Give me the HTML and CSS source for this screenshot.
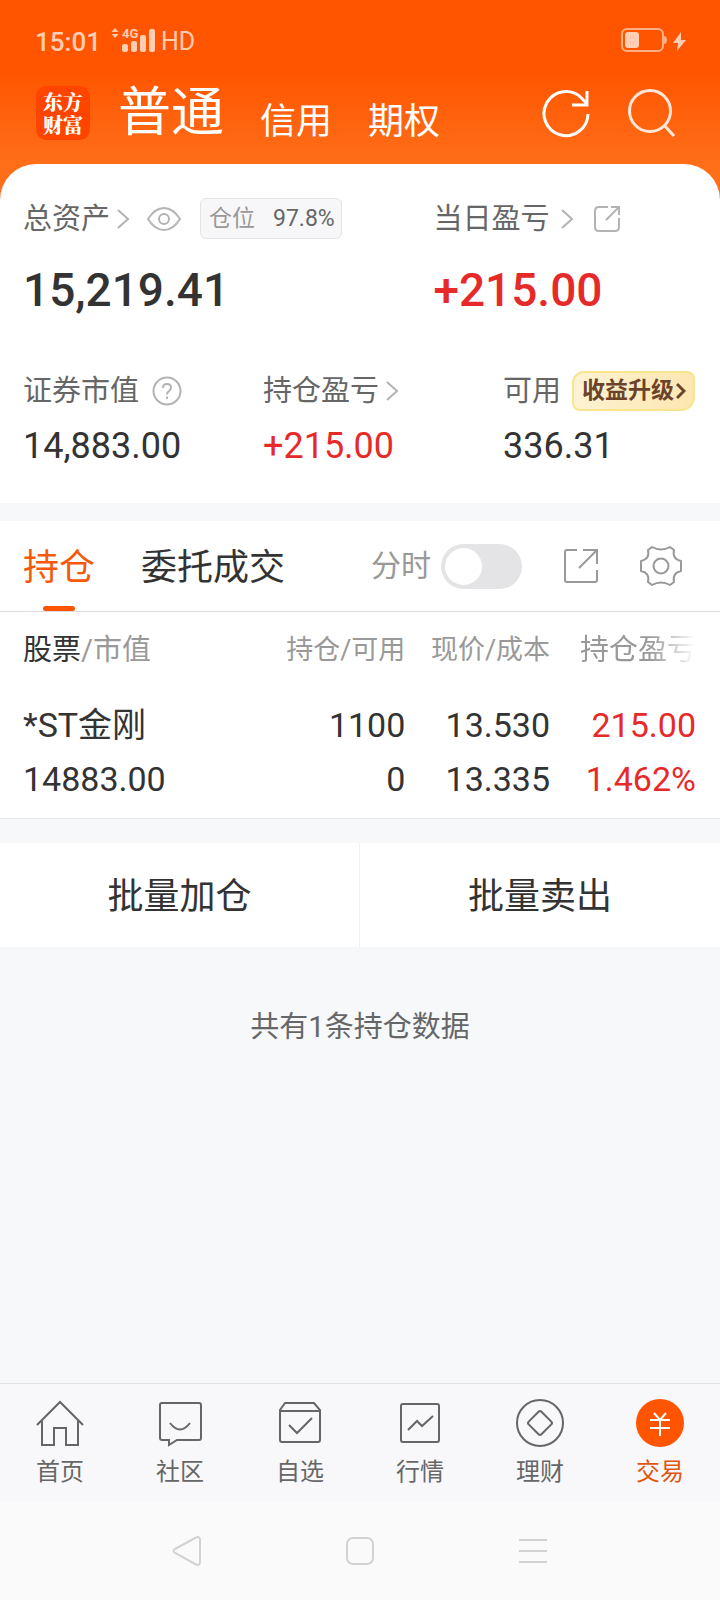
FILE: index.html
```html
<!DOCTYPE html>
<html lang="zh-CN">
<head>
<meta charset="utf-8">
<meta name="viewport" content="width=device-width, initial-scale=1">
<title>交易</title>
<link rel="stylesheet" href="styles.css">
</head>
<body>
<div class="hero">
  <div class="status">
    <span class="clock">15:01</span>
    <svg class="signal" width="46" height="26" viewBox="0 0 46 26" fill="currentColor">
      <path d="M4 1l3.5 4h-7zM4 11L.5 7h7z"/>
      <text x="11" y="11" font-size="13" font-weight="700">4G</text>
      <rect x="11" y="17" width="6" height="8" rx="2"/>
      <rect x="20" y="14" width="6" height="11" rx="2"/>
      <rect x="29" y="8" width="6" height="17" rx="2"/>
      <rect x="38" y="2" width="6" height="23" rx="2"/>
    </svg>
    <span class="hd">HD</span>
    <svg class="battery" width="66" height="26" viewBox="0 0 66 26">
      <rect x="2" y="2" width="41" height="22" rx="5" fill="none" stroke="currentColor" stroke-width="2" opacity=".75"/>
      <rect x="5" y="5" width="14" height="16" rx="3" fill="currentColor"/>
      <path d="M44 9q3 0 3 4t-3 4z" fill="currentColor" opacity=".75"/>
      <path d="M61 5L53 16h5l-1 8 9-11h-5z" fill="currentColor"/>
    </svg>
  </div>
  <header class="topbar">
    <div class="logo">东方<br>财富</div>
    <nav class="modes">
      <a class="mode mode-on" href="#normal">普通</a>
      <a class="mode" href="#credit">信用</a>
      <a class="mode" href="#option">期权</a>
    </nav>
    <div class="actions">
      <button class="icon-btn" aria-label="刷新">
        <svg width="50" height="50" viewBox="0 0 50 50" fill="none" stroke="#fff" stroke-width="3"><path d="M47 26A22 22 0 1 1 40.500 10L46 16M46 3V17H31"/></svg>
      </button>
      <button class="icon-btn" aria-label="搜索">
        <svg width="50" height="50" viewBox="0 0 50 50" fill="none" stroke="#ffe6d8" stroke-width="3"><circle cx="23" cy="23" r="20.500"/><path d="M37 37L47 48"/></svg>
      </button>
    </div>
  </header>

  <main class="account">
    <section class="totals">
      <div class="cell">
        <div class="label-row">
          <span class="label">总资产</span>
          <svg class="arrow" width="12" height="20" viewBox="0 0 12 20"><path d="M1 1l10 9-10 9"/></svg>
          <button class="icon-btn eye" aria-label="隐藏资产">
            <svg width="34" height="24" viewBox="0 0 34 24" fill="none" stroke="#b3b3b3" stroke-width="2"><path d="M1 12Q8 1 17 1t16 11Q26 23 17 23T1 12z"/><circle cx="17" cy="12" r="5"/></svg>
          </button>
          <span class="position"><span class="position-name">仓位</span><span>97.8%</span></span>
        </div>
        <div class="big">15,219.41</div>
      </div>
      <div class="cell">
        <div class="label-row">
          <span class="label">当日盈亏</span>
          <svg class="arrow arrow-far" width="12" height="20" viewBox="0 0 12 20"><path d="M1 1l10 9-10 9"/></svg>
          <button class="icon-btn share-small" aria-label="分享">
            <svg width="28" height="28" viewBox="0 0 28 28" fill="none" stroke="#b3b3b3" stroke-width="2"><path d="M15 2H6Q2 2 2 6v16q0 4 4 4h16q4 0 4-4v-9M13 15L25 3M18 2h8v8"/></svg>
          </button>
        </div>
        <div class="big up">+215.00</div>
      </div>
    </section>
    <section class="details">
      <div class="cell">
        <div class="label-row">
          <span class="label">证券市值</span>
          <button class="icon-btn help" aria-label="说明">
            <svg width="30" height="30" viewBox="0 0 30 30" fill="none" stroke="#b3b3b3" stroke-width="2"><circle cx="15" cy="15" r="13.500"/><path d="M11 12q0-4 4-4t4 3.500q0 2-2 3.500t-2 3.500M15 20.500v2.500"/></svg>
          </button>
        </div>
        <div class="value">14,883.00</div>
      </div>
      <div class="cell">
        <div class="label-row">
          <span class="label">持仓盈亏</span>
          <svg class="arrow" width="12" height="20" viewBox="0 0 12 20"><path d="M1 1l10 9-10 9"/></svg>
        </div>
        <div class="value up">+215.00</div>
      </div>
      <div class="cell">
        <div class="label-row">
          <span class="label">可用</span>
          <button class="upgrade">收益升级<svg width="10" height="18" viewBox="0 0 10 18" fill="none" stroke="currentColor" stroke-width="3"><path d="M1 2l7 7-7 7"/></svg></button>
        </div>
        <div class="value">336.31</div>
      </div>
    </section>
  </main>
</div>

<section class="holdings">
  <div class="tabs">
    <button class="tab tab-on">持仓</button>
    <button class="tab">委托成交</button>
    <label class="minute">分时<input class="switch" type="checkbox" role="switch"></label>
    <button class="icon-btn" aria-label="导出">
      <svg width="36" height="36" viewBox="0 0 36 36" fill="none" stroke="#999" stroke-width="2"><path d="M14 2H4Q2 2 2 4v28q0 2 2 2h28q2 0 2-2V22M16 20L34 2M20 2h14v14"/></svg>
    </button>
    <button class="icon-btn" aria-label="设置">
      <svg width="42" height="42" viewBox="0 0 42 42" fill="none" stroke="#999" stroke-width="2" stroke-linejoin="round"><path d="M12 2Q21 7 30 2L34 5Q32 14 41 16V26Q32 28 34 37L30 40Q21 35 12 40L8 37Q10 28 1 26V16Q10 14 8 5z"/><circle cx="21" cy="21" r="7.500"/></svg>
    </button>
  </div>
  <table class="stocks">
    <colgroup><col class="c-name"><col class="c-qty"><col class="c-price"><col class="c-gain"></colgroup>
    <thead>
      <tr><th class="th-name"><b>股票</b>/市值</th><th>持仓/可用</th><th>现价/成本</th><th class="th-gain"><span class="fade">持仓盈亏</span></th></tr>
    </thead>
    <tbody>
      <tr>
        <td><span>*ST金刚</span><span>14883.00</span></td>
        <td><span>1100</span><span>0</span></td>
        <td><span>13.530</span><span>13.335</span></td>
        <td class="up"><span>215.00</span><span>1.462%</span></td>
      </tr>
    </tbody>
  </table>
</section>

<div class="batch">
  <button class="batch-btn">批量加仓</button>
  <button class="batch-btn">批量卖出</button>
</div>
<p class="count">共有1条持仓数据</p>

<nav class="bottom">
  <a class="item" href="#home">
    <svg width="48" height="48" viewBox="0 0 48 48"><path d="M1 26L24 3l23 23M6 21v25h12V29h12v17h12V21"/></svg>首页</a>
  <a class="item" href="#community">
    <svg width="48" height="48" viewBox="0 0 48 48"><path d="M5 4h38q2 0 2 2v33q0 2-2 2H21l-8 5v-5H6q-2 0-2-2V6q0-2 2-2M14 24q10 13 20 0"/></svg>社区</a>
  <a class="item" href="#watch">
    <svg width="48" height="48" viewBox="0 0 48 48"><path d="M4 11l5-7h29l6 7v30q0 2-2 2H6q-2 0-2-2zM4 12h40M13 26l8 8 15-15"/></svg>自选</a>
  <a class="item" href="#market">
    <svg width="48" height="48" viewBox="0 0 48 48"><rect x="5" y="5" width="38" height="38" rx="2"/><path d="M12 31l9-9 5 5 11-10"/></svg>行情</a>
  <a class="item" href="#wealth">
    <svg width="48" height="48" viewBox="0 0 48 48"><circle cx="24" cy="24" r="23"/><rect x="15" y="15" width="18" height="18" rx="2" transform="rotate(45 24 24)"/></svg>理财</a>
  <a class="item item-on" href="#trade">
    <svg width="48" height="48" viewBox="0 0 48 48"><circle class="disc" cx="24" cy="24" r="24"/><path class="yen" d="M18 14l6 7 6-7M14 21h20M14 29h20M24 21v16"/></svg>交易</a>
</nav>
<div class="system">
  <button class="icon-btn" aria-label="返回"><svg width="30" height="32" viewBox="0 0 30 32"><path d="M3 14L24 2.500Q28 1 28 5v22q0 4-4 2.500L3 18Q0 16 3 14z"/></svg></button>
  <button class="icon-btn" aria-label="主屏幕"><svg width="28" height="28" viewBox="0 0 28 28"><rect x="1" y="1" width="26" height="26" rx="6"/></svg></button>
  <button class="icon-btn" aria-label="最近任务"><svg width="28" height="28" viewBox="0 0 28 28"><path d="M0 3h28M0 14h28M0 25h28"/></svg></button>
</div>
</body>
</html>
```
FILE: styles.css
```css
* { box-sizing: border-box; }
body {
  margin: 0;
  min-height: 100vh;
  display: flex;
  flex-direction: column;
  background: #f6f8fa;
  color: #333;
  font-family: Roboto, "Noto Sans CJK SC", sans-serif;
  font-size: 29px;
}
button {
  padding: 0;
  border: 0;
  background: none;
  color: inherit;
  font: inherit;
}
a { color: inherit; text-decoration: none; }
svg { display: block; flex: none; }
.icon-btn { display: flex; }
.up { color: #e62a2a; }

.hero { background: linear-gradient(#ff5500 70px, #ff6e19 164px); }
.status {
  display: flex;
  align-items: center;
  height: 80px;
  padding: 0 34px 0 35px;
  color: #ffcdb3;
  font-size: 26px;
}
.clock { padding-top: 3px; font-weight: 500; }
.signal { margin: 0 4px 0 10px; }
.hd { padding-top: 2px; font-size: 25px; }
.battery { margin-left: auto; }

.topbar {
  display: flex;
  align-items: center;
  height: 84px;
  padding: 0 43px 18px 36px;
}
.logo {
  width: 54px;
  height: 54px;
  padding-top: 4px;
  border-radius: 10px;
  background: #ff4400;
  color: #fff;
  font-family: "Noto Serif CJK SC", "Noto Sans CJK SC", sans-serif;
  font-size: 20px;
  font-weight: 900;
  line-height: 23px;
  text-align: center;
}
.modes {
  display: flex;
  align-items: flex-end;
  gap: 36px;
  margin-left: 28px;
  color: #fff;
}
.mode { font-size: 36px; line-height: 42px; }
.mode-on { font-size: 53px; line-height: 60px; }
.actions { display: flex; gap: 36px; margin-left: auto; }

.account {
  padding: 34px 0 33px;
  border-radius: 36px 36px 0 0;
  background: #fff;
}
.totals { display: grid; grid-template-columns: 57% 43%; }
.details {
  display: grid;
  grid-template-columns: repeat(3, 1fr);
  margin-top: 50px;
}
.cell { padding-left: 23px; }
.label-row { display: flex; align-items: center; height: 41px; }
.label { color: #666; line-height: 40px; white-space: nowrap; }
.arrow { margin-left: 7px; fill: none; stroke: #b3b3b3; stroke-width: 2; }
.arrow-far { margin-left: 12px; }
.eye { margin-left: 18px; }
.share-small { margin-left: 20px; }
.help { margin-left: 13px; }
.position {
  display: flex;
  align-items: center;
  gap: 18px;
  height: 41px;
  margin-left: 19px;
  padding: 0 6px 0 8px;
  border: 1px solid #e4e4e6;
  border-radius: 6px;
  background: #f7f7fa;
  color: #666;
  font-size: 23px;
  line-height: 40px;
}
.position-name { color: #999; }
.big {
  margin-top: 21px;
  font-size: 46px;
  font-weight: 500;
  line-height: 60px;
}
.value { margin-top: 11px; font-size: 36px; line-height: 48px; }
.upgrade {
  display: flex;
  align-items: center;
  gap: 2px;
  height: 40px;
  margin-left: 11px;
  padding: 0 7px 0 8px;
  border: 2px solid #f8e58c;
  border-radius: 12px 8px 14px 8px;
  background: linear-gradient(100deg, #fdf3d4, #fde6b0);
  color: #6b432b;
  font-size: 23px;
  font-weight: 700;
  line-height: 36px;
  white-space: nowrap;
}

.holdings {
  margin-top: 18px;
  border-bottom: 1px solid #ececef;
  background: #fff;
}
.tabs {
  display: flex;
  align-items: center;
  height: 91px;
  padding: 0 38px 0 23px;
  border-bottom: 1px solid #dcdcde;
}
.tab {
  align-self: stretch;
  display: flex;
  flex-direction: column;
  align-items: center;
  margin-right: 46px;
  padding-top: 4px;
  font-size: 36px;
  line-height: 86px;
}
.tab-on { color: #f55a0a; }
.tab-on::after {
  content: "";
  width: 32px;
  height: 5px;
  margin-top: -5px;
  border-radius: 3px;
  background: #ff5500;
}
.minute {
  display: flex;
  align-items: center;
  gap: 10px;
  margin-left: auto;
  color: #999;
  font-size: 30px;
  line-height: 44px;
}
.tabs .icon-btn { margin-left: 41px; }
.switch {
  appearance: none;
  width: 81px;
  height: 45px;
  margin: 0;
  padding: 4px;
  border-radius: 23px;
  background: #e4e4e6;
}
.switch::before {
  content: "";
  display: block;
  width: 37px;
  height: 37px;
  border-radius: 50%;
  background: #fff;
}
.switch:checked { background: #ff5500; }
.switch:checked::before { margin-left: auto; }

.stocks { width: 100%; border-collapse: collapse; table-layout: fixed; }
.c-name { width: 34%; }
.c-qty { width: 22.3%; }
.c-price { width: 20.1%; }
.c-gain { width: 23.6%; }
.stocks th {
  height: 72px;
  padding: 4px 0 0;
  color: #999;
  font-size: 27px;
  font-weight: 400;
  line-height: 40px;
  text-align: right;
  white-space: nowrap;
}
.stocks .th-name { padding-left: 23px; font-size: 29px; text-align: left; }
.th-name b { color: #333; font-weight: 400; }
.stocks .th-gain { padding-right: 24px; font-size: 29px; }
.fade {
  -webkit-mask-image: linear-gradient(90deg, #000 60%, transparent);
  mask-image: linear-gradient(90deg, #000 60%, transparent);
}
.stocks td {
  padding: 14px 0 12px;
  font-size: 34px;
  line-height: 54px;
  text-align: right;
  white-space: nowrap;
}
.stocks td span { display: block; }
.stocks td:first-child { padding-left: 23px; text-align: left; }
.stocks td:last-child { padding-right: 24px; }

.batch {
  display: grid;
  grid-template-columns: 1fr 1fr;
  margin-top: 24px;
  background: #fff;
}
.batch-btn { height: 104px; padding-top: 3px; font-size: 36px; line-height: 48px; }
.batch-btn:first-child { border-right: 1px solid #f0f0f2; }
.count {
  margin: 60px 0;
  color: #666;
  line-height: 40px;
  text-align: center;
}

.bottom {
  display: grid;
  grid-template-columns: repeat(6, 1fr);
  height: 119px;
  margin-top: auto;
  padding-top: 15px;
  border-top: 1px solid #e2e3e5;
  background: #f8f8fa;
}
.item {
  display: flex;
  flex-direction: column;
  align-items: center;
  color: #666;
  font-size: 24px;
  line-height: 51px;
}
.item svg { fill: none; stroke: #666; stroke-width: 2; }
.item-on { color: #e0560f; }
.item .disc { fill: #ff5500; stroke: none; }
.item .yen { stroke: #fff; }
.system {
  display: grid;
  grid-template-columns: repeat(3, 24%);
  justify-content: center;
  justify-items: center;
  align-items: center;
  height: 98px;
  background: #fafafa;
}
.system svg { fill: none; stroke: #d2d2d2; stroke-width: 2; }
```
